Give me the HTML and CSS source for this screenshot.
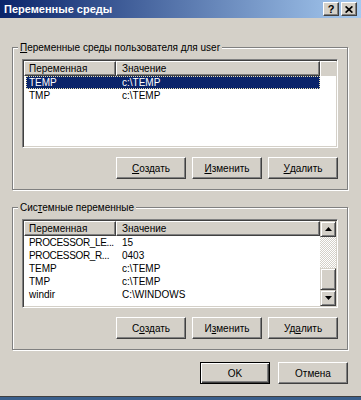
FILE: index.html
```html
<!DOCTYPE html>
<html lang="ru">
<head>
<meta charset="utf-8">
<title>Переменные среды</title>
<link rel="stylesheet" href="styles.css">
</head>
<body>
<div class="window">
  <div class="titlebar">
    <span class="title">Переменные среды</span>
    <div class="cbtns">
      <span class="cbtn help">?</span>
      <span class="cbtn"><svg width="8" height="7" viewBox="0 0 8 7"><path d="M0.6 0.4L7.4 6.6M7.4 0.4L0.6 6.6" stroke="#000" stroke-width="1.7"/></svg></span>
    </div>
  </div>
  <div class="content">
    <div class="group">
      <div class="legend"><u>П</u>еременные среды пользователя для user</div>
      <div class="list">
        <div class="lv-main">
          <div class="lv-header">
            <div class="hcell h1">Переменная</div>
            <div class="hcell h2">Значение</div>
            <div class="hfill"></div>
          </div>
          <div class="row selected"><div class="c1">TEMP</div><div class="c2">c:\TEMP</div></div>
          <div class="row"><div class="c1">TMP</div><div class="c2">c:\TEMP</div></div>
        </div>
      </div>
      <div class="btnrow">
        <div class="btn"><u>С</u>оздать</div>
        <div class="btn"><u>И</u>зменить</div>
        <div class="btn"><u>У</u>далить</div>
      </div>
    </div>
    <div class="group group2">
      <div class="legend">Сис<u>т</u>емные переменные</div>
      <div class="list">
        <div class="lv-main">
          <div class="lv-header">
            <div class="hcell h1">Переменная</div>
            <div class="hcell h2">Значение</div>
          </div>
          <div class="row"><div class="c1 tight">PROCESSOR_LE...</div><div class="c2">15</div></div>
          <div class="row"><div class="c1 tight">PROCESSOR_R...</div><div class="c2">0403</div></div>
          <div class="row"><div class="c1">TEMP</div><div class="c2">c:\TEMP</div></div>
          <div class="row"><div class="c1">TMP</div><div class="c2">c:\TEMP</div></div>
          <div class="row"><div class="c1">windir</div><div class="c2">C:\WINDOWS</div></div>
        </div>
        <div class="sb">
          <div class="sb-btn"><svg width="7" height="4" viewBox="0 0 7 4"><path d="M3.5 0L7 4H0Z" fill="#000"/></svg></div>
          <div class="sb-track"></div>
          <div class="sb-thumb"></div>
          <div class="sb-btn"><svg width="7" height="4" viewBox="0 0 7 4"><path d="M0 0H7L3.5 4Z" fill="#000"/></svg></div>
        </div>
      </div>
      <div class="btnrow">
        <div class="btn">С<u>о</u>здать</div>
        <div class="btn">И<u>з</u>менить</div>
        <div class="btn">Уд<u>а</u>лить</div>
      </div>
    </div>
    <div class="footer">
      <div class="btn default">OK</div>
      <div class="btn">Отмена</div>
    </div>
  </div>
</div>
</body>
</html>
```
FILE: styles.css
```css
* { box-sizing: border-box; }
html, body { margin: 0; padding: 0; }
body {
  width: 361px;
  height: 400px;
  overflow: hidden;
  background: #3a5f8c;
  font-family: "Liberation Sans", Arial, sans-serif;
  font-size: 10px;
  color: #000;
}
u { text-decoration: underline; text-underline-offset: 1px; }
.window {
  height: 397px;
  background: #d4d0c8;
  border-bottom: 1px solid #404040;
  display: flex;
  flex-direction: column;
}
.titlebar {
  height: 18px;
  flex: none;
  background: linear-gradient(to right, #0a246a, #a6caf0);
  display: flex;
  align-items: center;
  padding: 0 4px 0 4px;
}
.title {
  flex: 1;
  color: #fff;
  font-weight: bold;
  font-size: 11px;
}
.cbtns { display: flex; gap: 2px; }
.cbtn {
  width: 16px;
  height: 14px;
  background: #d4d0c8;
  border: 1px solid;
  border-color: #fff #404040 #404040 #fff;
  box-shadow: inset -1px -1px #808080;
  display: flex;
  align-items: center;
  justify-content: center;
  font-weight: bold;
  font-size: 11px;
  line-height: 1;
}
.content {
  padding: 29px 13px 0 12px;
  display: flex;
  flex-direction: column;
}
.group {
  border: 1px solid #808080;
  box-shadow: inset 1px 1px #fff, 1px 1px #fff;
  padding: 0 0 10px 0;
  display: flex;
  flex-direction: column;
}
.group2 { margin-top: 17px; }
.legend {
  align-self: flex-start;
  margin: -7px 0 0 5px;
  padding: 0 2px;
  height: 13px;
  line-height: 13px;
  background: #d4d0c8;
  white-space: nowrap;
}
.list {
  margin: 5px 9px 0 9px;
  height: 89px;
  background: #fff;
  border: 1px solid;
  border-color: #808080 #fff #fff #808080;
  box-shadow: inset 1px 1px #404040, inset -1px -1px #d4d0c8;
  padding: 1px;
  display: flex;
}
.lv-main {
  flex: 1;
  min-width: 0;
  display: flex;
  flex-direction: column;
}
.lv-header {
  display: flex;
  height: 15px;
  flex: none;
}
.hcell {
  background: #d4d0c8;
  border: 1px solid;
  border-color: #fff #404040 #404040 #fff;
  box-shadow: inset -1px -1px #808080;
  line-height: 13px;
  white-space: nowrap;
  overflow: hidden;
}
.h1 { width: 92px; padding-left: 4px; }
.h2 { width: 204px; padding-left: 5px; }
.hfill {
  flex: 1;
  background: #d4d0c8;
  border-top: 1px solid #fff;
  border-left: 1px solid #fff;
}
.row {
  display: flex;
  height: 13px;
  line-height: 13px;
  margin-left: 2px;
  width: 294px;
  white-space: nowrap;
}
.row .c1 { width: 90px; flex: none; padding-left: 3px; overflow: hidden; }
.row .c1.tight { letter-spacing: -0.35px; }
.row .c2 { flex: 1; padding-left: 6px; overflow: hidden; }
.row.selected {
  background: #0a246a;
  color: #fff;
  outline: 1px dotted #e8e0b0;
  outline-offset: -1px;
}
.sb {
  width: 16px;
  flex: none;
  display: flex;
  flex-direction: column;
}
.sb-btn, .sb-thumb {
  background: #d4d0c8;
  border: 1px solid;
  border-color: #d4d0c8 #404040 #404040 #d4d0c8;
  box-shadow: inset 1px 1px #fff, inset -1px -1px #808080;
}
.sb-btn {
  height: 16px;
  flex: none;
  display: flex;
  align-items: center;
  justify-content: center;
}
.sb-track {
  flex: 1;
  background: repeating-conic-gradient(#fff 0 25%, #d4d0c8 0 50%) 0 0 / 2px 2px;
}
.sb-thumb { height: 22px; flex: none; }
.btnrow {
  display: flex;
  justify-content: flex-end;
  gap: 6px;
  margin: 9px 9px 0 0;
}
.btn {
  width: 70px;
  height: 22px;
  background: #d4d0c8;
  border: 1px solid;
  border-color: #fff #404040 #404040 #fff;
  box-shadow: inset -1px -1px #808080;
  display: flex;
  align-items: center;
  justify-content: center;
  white-space: nowrap;
}
.btn.default {
  border-color: #000;
  box-shadow: inset 1px 1px #fff, inset -1px -1px #404040, inset -2px -2px #808080;
}
.footer {
  display: flex;
  justify-content: flex-end;
  gap: 8px;
  margin-top: 12px;
}
```
